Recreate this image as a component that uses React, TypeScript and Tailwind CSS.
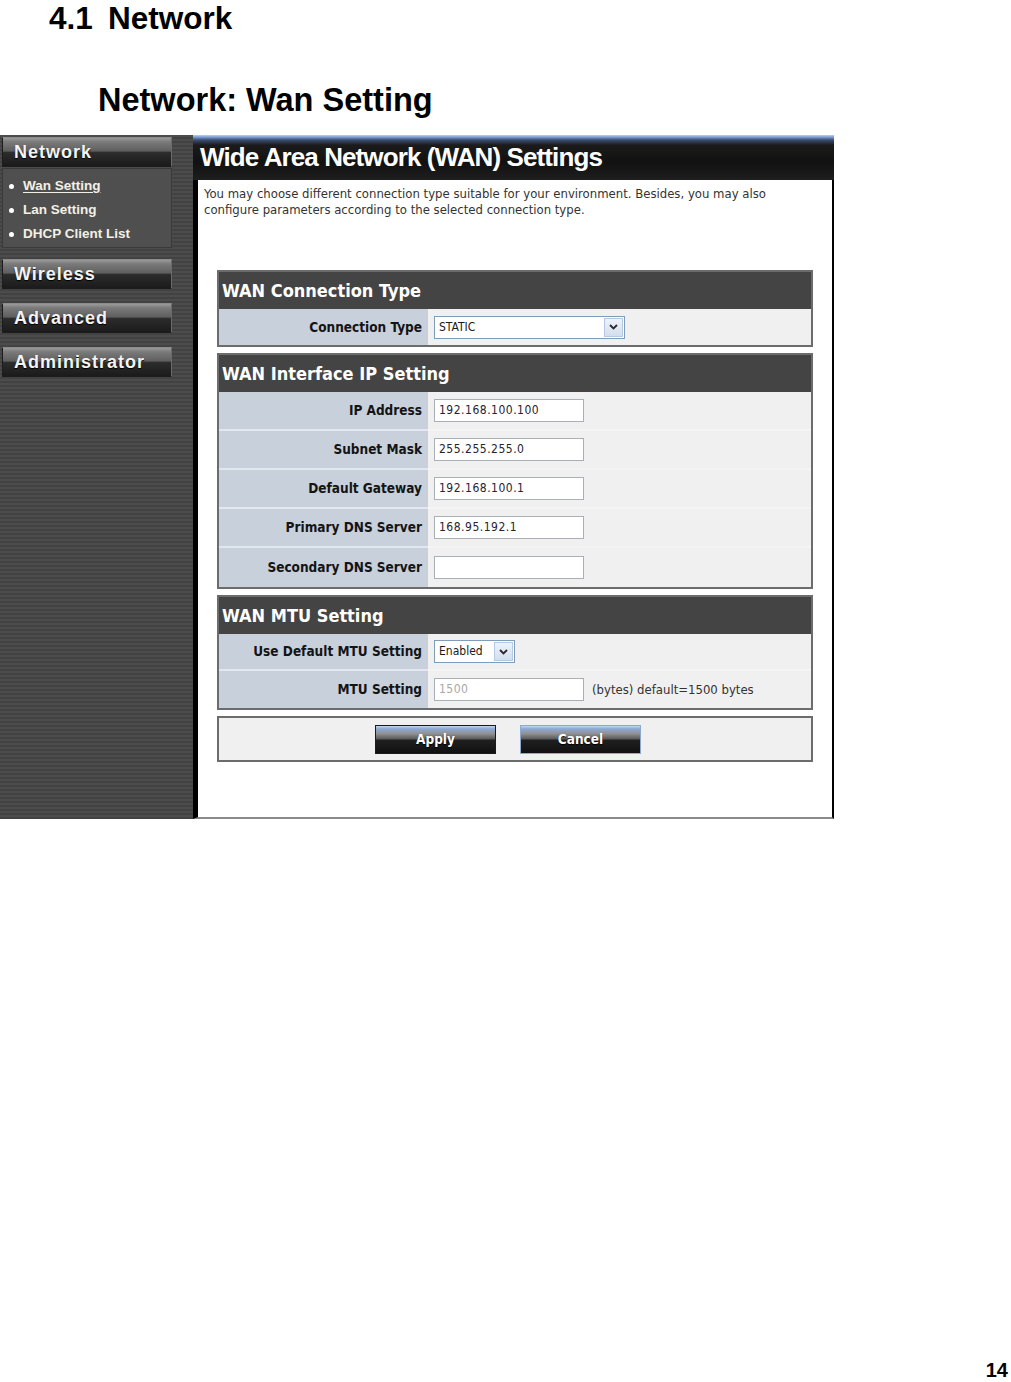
const ui = "font-['DejaVu_Sans_Condensed','DejaVu_Sans',sans-serif]";
const arial = "font-['Liberation_Sans',Arial,sans-serif]";

const sideMenu = ['Wan Setting', 'Lan Setting', 'DHCP Client List'];

function Chevron() {
  return (
    <svg width="9" height="6" viewBox="0 0 9 6">
      <path d="M1 1 L4.5 4.5 L8 1" fill="none" stroke="#2b2b2b" strokeWidth="1.8" />
    </svg>
  );
}

function SideButton({ label }: { label: string }) {
  return (
    <div
      className={`${arial} h-[30px] w-[170px] shrink-0 border border-[#1c1c1c] border-t-[#8c8c8c] border-r-[#6a6a6a] bg-[image:linear-gradient(180deg,#9a9a9a_0%,#7a7a7a_14%,#5f5f5f_46%,#2c2c2c_52%,#1b1b1b_100%)] pl-[11px] text-[18px] font-bold leading-[28px] tracking-[1px] text-[#f4f4f4] [text-shadow:0_1px_1px_#000]`}
    >
      {label}
    </div>
  );
}

function Panel({ title, children }: { title: string; children: React.ReactNode }) {
  return (
    <div className="ml-[19px] w-[596px] border-2 border-[#6c6c6c]">
      <div className={`${ui} h-[37px] bg-[#444444] pl-[3px] text-[18px] font-bold leading-[37px] text-white`}>
        {title}
      </div>
      {children}
    </div>
  );
}

function Row({ label, h, last, children }: { label: string; h: string; last?: boolean; children: React.ReactNode }) {
  return (
    <div className={`flex ${h}`}>
      <div
        className={`${ui} flex w-[209px] items-center justify-end bg-[#c8d0dc] pr-[6px] text-[13.5px] font-bold text-[#141414] ${last ? '' : 'border-b-2 border-[#e3e8ef]'}`}
      >
        {label}
      </div>
      <div className={`flex flex-1 items-center gap-[8px] bg-[#f0f0f0] pl-[6px] ${last ? '' : 'border-b-2 border-[#f4f4f4]'}`}>
        {children}
      </div>
    </div>
  );
}

function TextBox({ value, muted }: { value: string; muted?: boolean }) {
  return (
    <div
      className={`${ui} h-[23px] w-[150px] border border-[#a9afb7] bg-white px-[4px] text-[12px] leading-[21px] tracking-[0.5px] ${muted ? 'text-[#a8a8a8]' : 'text-[#2a2230]'}`}
    >
      {value}
    </div>
  );
}

function Select({ value, w }: { value: string; w: string }) {
  return (
    <div className={`flex h-[23px] ${w} border border-[#7f9db9] bg-white`}>
      <div className={`${ui} flex-1 px-[4px] text-[12px] leading-[21px] text-[#1a1a1a]`}>{value}</div>
      <div className="m-px flex w-[19px] items-center justify-center border border-[#b7c8e2] bg-[image:linear-gradient(180deg,#eef3fb_0%,#d3deee_100%)]">
        <Chevron />
      </div>
    </div>
  );
}

function ActionButton({ label, outline }: { label: string; outline: string }) {
  return (
    <div
      className={`${ui} flex h-[29px] w-[121px] items-center justify-center border ${outline} bg-[image:linear-gradient(180deg,#c4d7f4_0%,#8eaad6_10%,#929292_28%,#5c5c5c_47%,#1f1f1f_53%,#111111_100%)] text-[13.5px] font-bold text-white [text-shadow:0_1px_1px_#000]`}
    >
      {label}
    </div>
  );
}

export default function App() {
  return (
    <div className="flex h-[1382px] w-[1011px] flex-col overflow-hidden bg-white text-black">
      <div className={`${arial} ml-[49px] flex h-[36px] shrink-0 text-[31.5px] font-bold leading-[36px]`}>
        <span className="w-[59px]">4.1</span>
        <span>Network</span>
      </div>
      <div className={`${arial} ml-[98px] mt-[46px] h-[36px] shrink-0 text-[32.5px] font-bold leading-[36px]`}>
        Network: Wan Setting
      </div>

      <div className="mt-[17px] flex h-[684px] w-[834px] shrink-0">
        {/* sidebar */}
        <div className="flex w-[193px] flex-col bg-[image:repeating-linear-gradient(180deg,#4c4c4c_0px,#4c4c4c_2px,#424242_2px,#424242_4px)] pl-[2px] pt-[2px]">
          <SideButton label="Network" />
          <div className={`${arial} mt-px flex h-[80px] w-[170px] flex-col border border-[#3a3a3a] bg-[#4f4f4f] pt-[5px]`}>
            {sideMenu.map((item, i) => (
              <div key={item} className="flex h-[24px] items-center pl-[6px]">
                <span className="mr-[9px] h-[5px] w-[5px] rounded-full bg-white" />
                <span className={`text-[13.5px] font-bold text-[#f3f0e6] ${i === 0 ? 'underline underline-offset-2' : ''}`}>
                  {item}
                </span>
              </div>
            ))}
          </div>
          <div className="mt-[11px]">
            <SideButton label="Wireless" />
          </div>
          <div className="mt-[14px]">
            <SideButton label="Advanced" />
          </div>
          <div className="mt-[14px]">
            <SideButton label="Administrator" />
          </div>
        </div>

        {/* content */}
        <div className="flex w-[641px] flex-col">
          <div
            className={`${arial} h-[45px] shrink-0 bg-[image:linear-gradient(180deg,#bcd0f0_0px,#7e9fd6_2px,#3b4d70_5px,#1b1b1b_10px,#111111_60%,#1e1e1e_100%)] pl-[7px] text-[26px] font-bold leading-[45px] tracking-[-0.9px] text-white`}
          >
            Wide Area Network (WAN) Settings
          </div>
          <div className="flex-1 border-b-2 border-l-[5px] border-r-2 border-b-[#8a8a8a] border-l-black border-r-black bg-white">
            <p className={`${ui} pl-[6px] pt-[6px] text-[13px] leading-[16px] text-[#333]`}>
              You may choose different connection type suitable for your environment. Besides, you may also
              <br />
              configure parameters according to the selected connection type.
            </p>

            <div className="mt-[52px] flex flex-col gap-[6px]">
              <Panel title="WAN Connection Type">
                <Row label="Connection Type" h="h-[36px]" last>
                  <Select value="STATIC" w="w-[191px]" />
                </Row>
              </Panel>

              <Panel title="WAN Interface IP Setting">
                <Row label="IP Address" h="h-[39px]">
                  <TextBox value="192.168.100.100" />
                </Row>
                <Row label="Subnet Mask" h="h-[39px]">
                  <TextBox value="255.255.255.0" />
                </Row>
                <Row label="Default Gateway" h="h-[39px]">
                  <TextBox value="192.168.100.1" />
                </Row>
                <Row label="Primary DNS Server" h="h-[39px]">
                  <TextBox value="168.95.192.1" />
                </Row>
                <Row label="Secondary DNS Server" h="h-[39px]" last>
                  <TextBox value="" />
                </Row>
              </Panel>

              <Panel title="WAN MTU Setting">
                <Row label="Use Default MTU Setting" h="h-[37px]">
                  <Select value="Enabled" w="w-[81px]" />
                </Row>
                <Row label="MTU Setting" h="h-[37px]" last>
                  <TextBox value="1500" muted />
                  <span className={`${ui} text-[13px] text-[#333]`}>(bytes) default=1500 bytes</span>
                </Row>
              </Panel>

              <div className="ml-[19px] flex h-[46px] w-[596px] items-center justify-center gap-[24px] border-2 border-[#6c6c6c] bg-[#f0f0f0] pr-[14px]">
                <ActionButton label="Apply" outline="border-[#1a1a1a]" />
                <ActionButton label="Cancel" outline="border-[#8ea9cf]" />
              </div>
            </div>
          </div>
        </div>
      </div>

      <div className={`${arial} mt-auto pr-[3px] text-right text-[20px] font-bold leading-[24px]`}>14</div>
    </div>
  );
}
